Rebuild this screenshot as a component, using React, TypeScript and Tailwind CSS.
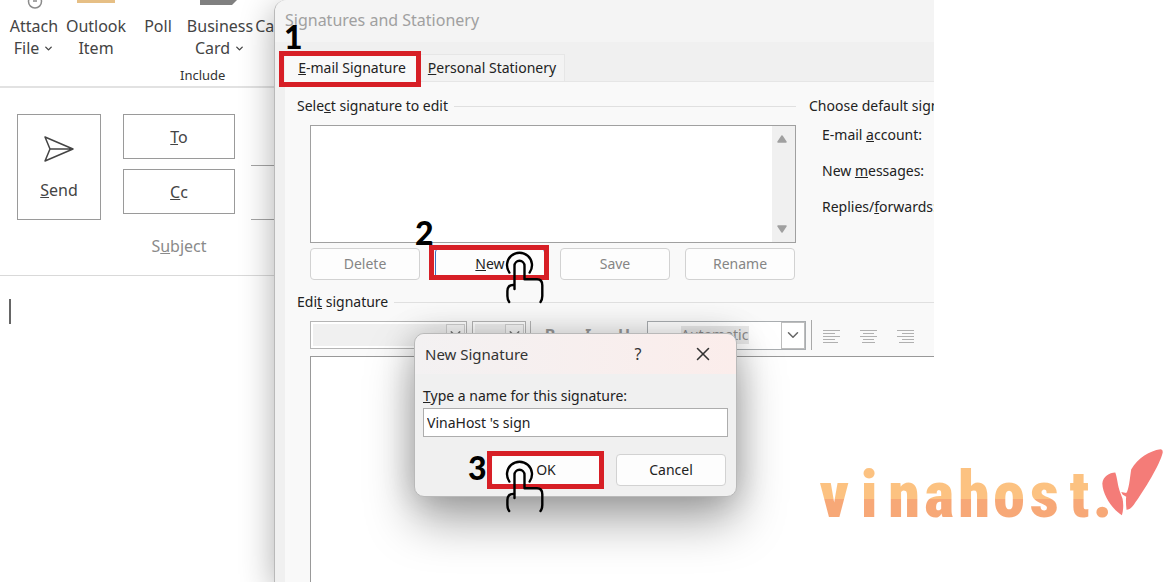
import type { ReactNode } from "react";
import clsx from "clsx";
import { ChevronDown, X } from "lucide-react";

const TapHand = ({ className }: { className?: string }) => (
  <svg
    viewBox="0 0 39 54"
    className={clsx("pointer-events-none absolute z-10 h-[54px] w-[39px]", className)}
    fill="none"
    stroke="#000"
    strokeWidth="2.4"
    strokeLinecap="round"
    strokeLinejoin="round"
    aria-hidden="true"
  >
    <path d="M4.4 21.6A12.5 12.5 0 1 1 24.6 21.6" />
    <path d="M9.5 38V14.8a5 5 0 0 1 10 0V28.3H32q5.3 0 5.3 6V45q0 3.5-1.8 6" />
    <path d="M9 34H8q-5.6 0-5.6 6V45q0 3.5 1.8 6" />
  </svg>
);

const RedFrame = ({ className }: { className: string }) => (
  <span
    className={clsx("pointer-events-none absolute border-[5px] border-[#d71f26]", className)}
  />
);

const StepNumber = ({ children, className }: { children: ReactNode; className: string }) => (
  <span
    className={clsx(
      "pointer-events-none absolute z-10 font-[Lato,sans-serif] text-[32px] leading-8 font-black text-black",
      className,
    )}
  >
    {children}
  </span>
);

const DialogButton = ({
  children,
  muted,
  active,
}: {
  children: ReactNode;
  muted?: boolean;
  active?: boolean;
}) => (
  <button
    type="button"
    className={clsx(
      "h-8 w-[110px] rounded border bg-[#fdfdfd] text-sm",
      muted ? "text-[#858585]" : "text-[#222]",
      active ? "border-[#3b6fc0]" : "border-[#d2d2d2]",
    )}
  >
    {children}
  </button>
);

const ribbonItems = [
  {
    id: "attach",
    lines: ["Attach", "File"],
    menu: true,
    icon: (
      <g fill="none" stroke="#8a8a8a" strokeWidth="1.5">
        <circle cx="32" cy="1.5" r="6.5" />
        <path d="M30 1h4" />
      </g>
    ),
  },
  {
    id: "outlook",
    lines: ["Outlook", "Item"],
    menu: false,
    icon: <path d="M12 0h38v3H12z" fill="#e6bf85" />,
  },
  { id: "poll", lines: ["Poll"], menu: false, icon: null },
  {
    id: "business",
    lines: ["Business", "Card"],
    menu: true,
    icon: <path d="M11 0h37l-5 5H11z" fill="#808080" />,
  },
  {
    id: "calendar",
    lines: ["Calendar"],
    menu: false,
    icon: <path d="M23 0v4h10" fill="none" stroke="#8a8a8a" />,
  },
];

const Ribbon = () => (
  <div className="h-[88px] overflow-hidden border-b-2 border-[#e2e2e2]">
    <div className="flex pl-[3px]">
      {ribbonItems.map((item) => (
        <button
          key={item.id}
          type="button"
          className="flex w-[62px] shrink-0 flex-col items-center text-base leading-[22px] whitespace-nowrap text-[#444] last:w-[76px]"
        >
          <svg viewBox="0 0 62 15" className="h-[15px] w-[62px]" aria-hidden="true">
            {item.icon}
          </svg>
          {item.lines.map((line, i) => (
            <span key={line} className="flex items-center gap-1">
              {line}
              {item.menu && i === 1 && <ChevronDown size={11} strokeWidth={3} />}
            </span>
          ))}
        </button>
      ))}
    </div>
    <p className="ml-[180px] pt-1.5 text-[13px] leading-5 text-[#333]">Include</p>
  </div>
);

const addressButton =
  "h-[45px] w-28 border border-[#9a9a9a] bg-white text-base text-[#444]";

const ComposePane = () => (
  <section className="w-[274px] shrink-0 overflow-hidden">
    <Ribbon />
    <div className="flex h-[188px] border-b border-[#d9d9d9] pt-[26px] pl-[17px]">
      <button
        type="button"
        className="flex h-[106px] w-[84px] shrink-0 flex-col items-center gap-[15px] border border-[#9a9a9a] pt-5 text-base text-[#444]"
      >
        <svg
          viewBox="0 0 30 28"
          className="h-7 w-[30px]"
          fill="none"
          stroke="#444"
          strokeWidth="1.5"
          strokeLinejoin="round"
          aria-hidden="true"
        >
          <path d="M1 2 29 14 1 26 6 14zM6 14H29" />
        </svg>
        <span>
          <u>S</u>end
        </span>
      </button>
      <div className="ml-[22px] flex w-28 shrink-0 flex-col gap-2.5">
        <button type="button" className={addressButton}>
          <u>T</u>o
        </button>
        <button type="button" className={addressButton}>
          <u>C</u>c
        </button>
        <label htmlFor="subject" className="pt-2.5 text-center text-base text-[#8a8a8a]">
          S<u>u</u>bject
        </label>
      </div>
      <div className="ml-4 flex min-w-0 flex-1 flex-col">
        <input aria-label="To" className="h-[52px] w-full border-b border-[#a5a5a5] outline-none" />
        <input aria-label="Cc" className="h-[54px] w-full border-b border-[#a5a5a5] outline-none" />
        <input id="subject" className="h-12 w-full outline-none" />
      </div>
    </div>
    <div className="px-[9px] pt-[23px]">
      <div className="h-[25px] w-0.5 bg-[#666]" />
    </div>
  </section>
);

const GroupTitle = ({ children }: { children: ReactNode }) => (
  <h2 className="flex items-center gap-1.5 text-sm leading-5 whitespace-nowrap text-[#222]">
    <span>{children}</span>
    <span className="h-px flex-1 bg-[#e0e0e0]" />
  </h2>
);

const Tabs = () => (
  <div role="tablist" className="flex h-[27px] pl-2.5 text-sm text-[#222]">
    <div className="relative">
      <button
        type="button"
        role="tab"
        aria-selected="true"
        className="h-7 w-[134px] bg-[#f9f9f9]"
      >
        <u>E</u>-mail Signature
      </button>
      <RedFrame className="-top-[3px] -left-1.5 h-9 w-[142px]" />
      <StepNumber className="-top-[33px] -left-px">1</StepNumber>
    </div>
    <button
      type="button"
      role="tab"
      aria-selected="false"
      className="w-[146px] border border-b-0 border-[#e6e6e6] bg-[#f3f3f3]"
    >
      <u>P</u>ersonal Stationery
    </button>
  </div>
);

const SignatureList = () => (
  <div className="ml-[13px] flex h-[118px] border border-[#a0a0a0] bg-white">
    <select
      size={4}
      aria-label="Select signature to edit"
      className="h-full min-w-0 flex-1 appearance-none outline-none"
    />
    <div className="flex w-[23px] flex-col items-center justify-between bg-[#f0f0f0] py-[9px] pr-1">
      <svg viewBox="0 0 10 8" className="h-2 w-2.5" aria-hidden="true">
        <path
          d="M5 1 9 7H1z"
          fill="#a0a0a0"
          stroke="#a0a0a0"
          strokeWidth="1.5"
          strokeLinejoin="round"
        />
      </svg>
      <svg viewBox="0 0 10 8" className="h-2 w-2.5" aria-hidden="true">
        <path
          d="M1 1H9L5 7z"
          fill="#a0a0a0"
          stroke="#a0a0a0"
          strokeWidth="1.5"
          strokeLinejoin="round"
        />
      </svg>
    </div>
  </div>
);

const FontSelect = ({ label, className }: { label: string; className: string }) => (
  <div className={clsx("relative h-7 border border-[#b5b5b5] bg-white p-0.5", className)}>
    <select aria-label={label} className="h-full w-full appearance-none bg-[#f0f0f0]" />
    <span className="pointer-events-none absolute top-0.5 right-px flex h-[22px] w-[19px] items-start justify-center border border-[#cfcfcf] bg-[#f7f7f7] text-[#777]">
      <ChevronDown size={18} />
    </span>
  </div>
);

const AlignIcon = ({ d, label }: { d: string; label: string }) => (
  <button type="button" aria-label={label}>
    <svg viewBox="0 0 17 13" className="h-[13px] w-[17px]" stroke="#b0b0b0" aria-hidden="true">
      <path d={d} />
    </svg>
  </button>
);

const FormatToolbar = () => (
  <div className="ml-[13px] flex h-[30px] items-center whitespace-nowrap">
    <FontSelect label="Font" className="w-[157px]" />
    <FontSelect label="Font size" className="ml-[5px] w-[54px]" />
    <span className="ml-1 h-7 w-px bg-[#b5b5b5]" />
    <div className="ml-[11px] flex w-[90px] justify-between text-base text-[#999]">
      <button type="button" className="w-4 font-bold">
        B
      </button>
      <button type="button" className="w-4 font-bold italic">
        I
      </button>
      <button type="button" className="w-4 font-bold underline">
        U
      </button>
    </div>
    <div className="relative ml-[15px] h-[29px] w-[159px] border border-[#a9adb0] bg-white">
      <select
        aria-label="Font color"
        className="ml-[33px] h-[18px] w-[68px] appearance-none bg-[#e9e9e9] text-sm leading-[18px] text-[#8a8a8a]"
      >
        <option>Automatic</option>
      </select>
      <span className="pointer-events-none absolute top-0 right-0 flex h-[27px] w-6 items-center justify-center border border-[#bdbdbd] bg-white text-[#666]">
        <ChevronDown size={18} />
      </span>
    </div>
    <span className="ml-[5px] h-[30px] w-px bg-[#a9a9a9]" />
    <div className="ml-[11px] flex gap-5 pt-0.5">
      <AlignIcon label="Align left" d="M0 .5H17M0 3.5H12M0 6.5H17M0 9.5H12M0 12.5H15" />
      <AlignIcon label="Center" d="M0 .5H17M3 3.5H14M0 6.5H17M3 9.5H14M2 12.5H15" />
      <AlignIcon label="Align right" d="M0 .5H17M5 3.5H17M0 6.5H17M5 9.5H17M2 12.5H17" />
    </div>
  </div>
);

const NewSignatureDialog = () => (
  <div
    role="dialog"
    aria-label="New Signature"
    className="absolute top-[333px] left-[139px] w-[323px] rounded-[10px] border border-[#b9b9b9] bg-[#f0f0f0] shadow-[0_24px_48px_rgba(0,0,0,0.34),0_0_32px_rgba(0,0,0,0.18)]"
  >
    <div className="flex h-10 items-center rounded-t-[10px] bg-linear-to-r from-[#f3f1f2] to-[#fbedeb] pl-2.5 text-[#333]">
      <h2 className="flex-1 text-[15px]">New Signature</h2>
      <button type="button" aria-label="Help" className="w-8 text-base">
        ?
      </button>
      <button type="button" aria-label="Close" className="mr-[22px] ml-[38px]">
        <X size={22} strokeWidth={1.7} />
      </button>
    </div>
    <div className="px-2 pt-3 pb-2.5 text-sm text-[#222]">
      <label htmlFor="signature-name" className="block leading-5">
        <u>T</u>ype a name for this signature:
      </label>
      <input
        id="signature-name"
        defaultValue="VinaHost 's sign"
        className="mt-0.5 block h-[29px] w-full border border-[#adadad] bg-white px-[3px] outline-none"
      />
      <div className="mt-[17px] flex justify-end gap-[15px] pr-0.5">
        <div className="relative">
          <DialogButton>OK</DialogButton>
          <RedFrame className="-top-[3px] -left-1 h-[38px] w-[117px]" />
          <StepNumber className="-top-0.5 -left-[23px]">3</StepNumber>
          <TapHand className="top-1.5 left-3.5" />
        </div>
        <DialogButton>Cancel</DialogButton>
      </div>
    </div>
  </div>
);

const SignaturesWindow = () => (
  <section className="relative flex min-w-0 flex-1 flex-col rounded-tl-xl border-l border-[#b9b9b9] bg-[#f0f0f0] shadow-[0_8px_34px_rgba(0,0,0,0.32)]">
    <h1 className="h-[42px] rounded-tl-xl bg-[#f4f4f4] pt-[9px] pl-2.5 text-base leading-[22px] text-[#a0a0a0]">
      Signatures and Stationery
    </h1>
    <div className="pt-3">
      <Tabs />
    </div>
    <div className="ml-2.5 flex flex-1 flex-col overflow-hidden border-t border-[#e6e6e6] bg-[#f9f9f9] pt-3.5 pl-3">
      <div className="flex gap-[13px]">
        <div className="w-[499px] shrink-0">
          <GroupTitle>
            Sele<u>c</u>t signature to edit
          </GroupTitle>
          <div className="pt-[9px]">
            <SignatureList />
          </div>
          <div className="mt-[5px] ml-[13px] flex gap-[15px]">
            <DialogButton muted>Delete</DialogButton>
            <div className="relative">
              <DialogButton active>
                <u>N</u>ew
              </DialogButton>
              <RedFrame className="-top-[3px] -left-1.5 h-[35px] w-[120px]" />
              <StepNumber className="-top-[31px] -left-5">2</StepNumber>
              <TapHand className="top-[3px] left-[70px]" />
            </div>
            <DialogButton muted>Save</DialogButton>
            <DialogButton muted>Rename</DialogButton>
          </div>
        </div>
        <div className="min-w-0 flex-1 overflow-hidden text-sm leading-5 whitespace-nowrap text-[#222]">
          <h2>Choose default signature</h2>
          <div className="flex flex-col gap-4 pt-[9px] pl-[13px]">
            <span>
              E-mail <u>a</u>ccount:
            </span>
            <span>
              New <u>m</u>essages:
            </span>
            <span>
              Replies/<u>f</u>orwards:
            </span>
          </div>
        </div>
      </div>
      <div className="pt-3">
        <GroupTitle>
          Edi<u>t</u> signature
        </GroupTitle>
      </div>
      <div className="pt-2">
        <FormatToolbar />
      </div>
      <textarea
        aria-label="Edit signature"
        className="mt-1.5 ml-[13px] flex-1 resize-none border-t border-l border-[#999] bg-white outline-none"
      />
    </div>
    <NewSignatureDialog />
  </section>
);

const Logo = () => (
  <div className="flex items-end" role="img" aria-label="vinahost.">
    <div className="flex font-['Liberation_Sans_Narrow','Roboto_Condensed','DejaVu_Sans_Condensed',sans-serif] text-[64px] leading-[70px] font-black">
      {[..."vinahost"].map((letter, i) => (
        <span
          key={i}
          className="flex w-[35px] justify-center bg-linear-to-b from-[#fcc281] from-55% to-[#f7a877] to-55% bg-clip-text text-transparent"
        >
          {letter}
        </span>
      ))}
      <span className="-ml-1 text-[#f7a877]">.</span>
    </div>
    <svg viewBox="876 56 184 202" className="mb-[15px] -ml-2.5 h-[67px] w-[61px]" aria-hidden="true">
      <path
        d="M936 256C908 238 878 196 877 160 879 139 898 128 916 127 922 142 923 168 932 190L938 206Q943 232 936 256Z"
        fill="#f47c78"
      />
      <path
        d="M950 239Q947 214 949 200L938 193 934 186 949 189C957 181 960 145 964 118 985 82 1020 62 1052 57Q1060 57 1059 67C1051 102 1005 178 972 224Q960 240 950 239Z"
        fill="#f47c78"
      />
    </svg>
  </div>
);

export default function App() {
  return (
    <main className="flex min-h-screen overflow-hidden bg-white font-['Noto_Sans','Open_Sans',sans-serif]">
      <div className="flex min-w-0 flex-1 overflow-hidden">
        <ComposePane />
        <SignaturesWindow />
      </div>
      <aside className="relative w-[239px] shrink-0">
        <div className="absolute right-2.5 bottom-[51px]">
          <Logo />
        </div>
      </aside>
    </main>
  );
}
